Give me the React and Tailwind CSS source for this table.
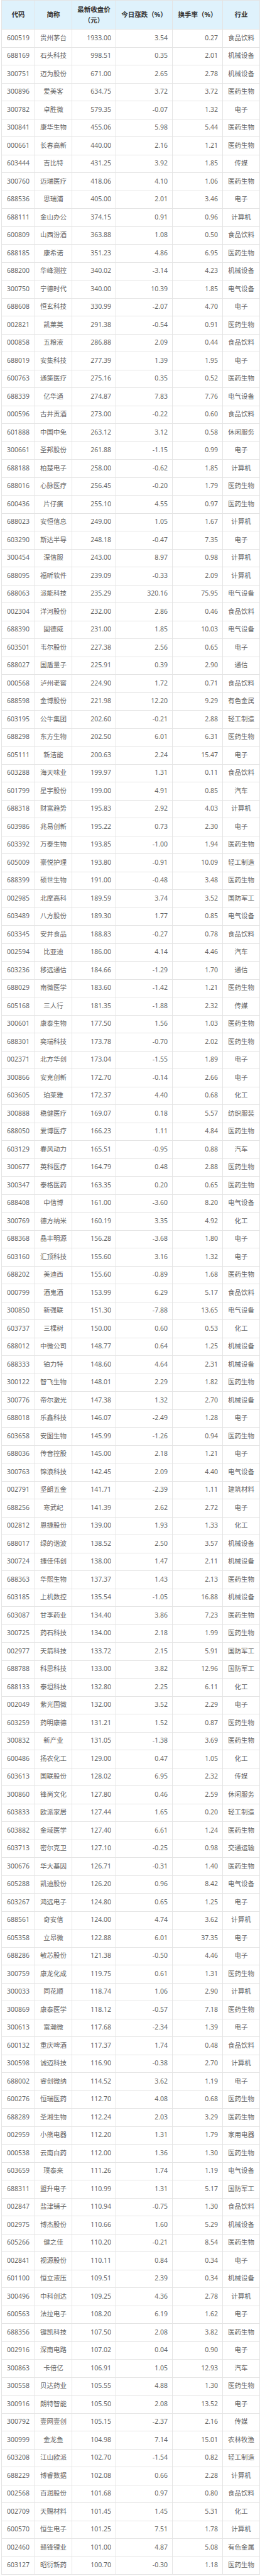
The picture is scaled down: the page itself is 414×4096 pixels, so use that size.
import React from "react";

// code | name | close | change % | turnover % | industry
const raw = `600519 贵州茅台 1933.00 3.54 0.27 食品饮料
688169 石头科技 998.51 0.35 2.01 机械设备
300751 迈为股份 671.00 2.65 2.78 机械设备
300896 爱美客 634.75 3.72 3.72 医药生物
300782 卓胜微 579.35 -0.07 1.32 电子
300841 康华生物 455.06 5.98 5.44 医药生物
000661 长春高新 440.00 2.16 1.21 医药生物
603444 吉比特 431.25 3.92 1.85 传媒
300760 迈瑞医疗 418.06 4.10 1.06 医药生物
688536 思瑞浦 405.00 2.01 3.46 电子
688111 金山办公 374.15 0.91 0.96 计算机
600809 山西汾酒 363.88 1.08 0.50 食品饮料
688185 康希诺 351.23 4.86 6.95 医药生物
688200 华峰测控 340.02 -3.14 4.23 机械设备
300750 宁德时代 340.00 10.39 1.85 电气设备
688608 恒玄科技 330.99 -2.07 4.70 电子
002821 凯莱英 291.38 -0.54 0.91 医药生物
000858 五粮液 286.88 2.09 0.44 食品饮料
688019 安集科技 277.39 1.39 1.95 电子
600763 通策医疗 275.16 0.35 0.52 医药生物
688339 亿华通 274.87 7.83 7.76 电气设备
000596 古井贡酒 273.00 -0.22 0.60 食品饮料
601888 中国中免 263.12 3.12 0.58 休闲服务
300661 圣邦股份 261.88 -1.15 0.99 电子
688188 柏楚电子 258.00 -0.62 1.85 计算机
688016 心脉医疗 256.45 -0.20 1.79 医药生物
600436 片仔癀 255.10 4.55 0.97 医药生物
688023 安恒信息 249.00 1.05 1.67 计算机
603290 斯达半导 248.18 -0.47 7.35 电子
300454 深信服 243.00 8.97 0.98 计算机
688095 福昕软件 239.09 -0.33 2.09 计算机
688063 派能科技 235.29 320.16 75.95 电气设备
002304 洋河股份 232.00 2.86 0.46 食品饮料
688390 固德威 231.00 1.85 10.03 电气设备
603501 韦尔股份 227.38 2.56 0.65 电子
688027 国盾量子 225.91 0.39 2.90 通信
000568 泸州老窖 224.90 1.72 0.71 食品饮料
688598 金博股份 221.98 12.20 9.29 有色金属
603195 公牛集团 202.60 -0.21 2.88 轻工制造
688298 东方生物 202.50 6.01 6.31 医药生物
605111 新洁能 200.63 2.24 15.47 电子
603288 海天味业 199.97 1.31 0.11 食品饮料
601799 星宇股份 199.00 4.91 0.85 汽车
688318 财富趋势 195.83 2.92 4.03 计算机
603986 兆易创新 195.22 0.73 2.30 电子
603392 万泰生物 193.85 -1.00 1.94 医药生物
605009 豪悦护理 193.80 -0.91 10.09 轻工制造
688399 硕世生物 191.00 -0.48 3.48 医药生物
002985 北摩高科 189.59 3.74 3.52 国防军工
603489 八方股份 189.30 1.77 0.85 电气设备
603345 安井食品 188.83 -0.27 0.78 食品饮料
002594 比亚迪 186.00 4.14 4.46 汽车
603236 移远通信 184.66 -1.29 1.70 通信
688029 南微医学 183.60 -1.42 1.21 医药生物
605168 三人行 181.35 -1.88 2.32 传媒
300601 康泰生物 177.50 1.56 1.03 医药生物
688301 奕瑞科技 173.78 -0.70 2.02 医药生物
002371 北方华创 173.04 -1.55 1.89 电子
300866 安克创新 172.70 -0.14 2.66 电子
603605 珀莱雅 172.37 4.40 0.68 化工
300888 稳健医疗 169.07 0.18 5.57 纺织服装
688050 爱博医疗 166.23 1.11 4.84 医药生物
603129 春风动力 165.51 -0.95 0.88 汽车
300677 英科医疗 164.79 0.48 2.88 医药生物
300347 泰格医药 163.35 0.20 0.65 医药生物
688408 中信博 161.00 -3.60 8.20 电气设备
300769 德方纳米 160.19 3.35 4.92 化工
688368 晶丰明源 156.28 -3.68 1.80 电子
603160 汇顶科技 155.60 3.16 1.32 电子
688202 美迪西 155.60 -0.89 1.68 医药生物
000799 酒鬼酒 153.99 6.29 5.17 食品饮料
300850 新强联 151.30 -7.88 13.65 电气设备
603737 三棵树 150.00 0.60 0.53 化工
688012 中微公司 148.77 0.64 1.25 机械设备
688333 铂力特 148.60 4.64 2.31 机械设备
300122 智飞生物 148.01 2.29 1.82 医药生物
300776 帝尔激光 147.38 1.32 2.70 机械设备
688018 乐鑫科技 146.07 -2.49 1.28 电子
603658 安图生物 145.99 -1.26 0.94 医药生物
688036 传音控股 145.00 2.18 1.21 电子
300763 锦浪科技 142.45 2.09 4.40 电气设备
002791 坚朗五金 141.71 -2.39 1.11 建筑材料
688256 寒武纪 141.39 2.62 2.72 电子
002812 恩捷股份 139.00 1.93 1.33 化工
688017 绿的谐波 138.52 2.50 3.57 机械设备
300724 捷佳伟创 138.00 1.47 2.11 机械设备
688363 华熙生物 137.37 1.43 2.13 医药生物
603185 上机数控 135.54 -1.05 16.88 机械设备
603087 甘李药业 134.40 3.86 7.23 医药生物
300725 药石科技 134.00 2.18 1.99 医药生物
002977 天箭科技 133.72 2.15 5.91 国防军工
688788 科思科技 133.00 3.82 12.96 国防军工
688133 泰坦科技 132.80 2.25 6.11 化工
002049 紫光国微 132.00 3.52 2.29 电子
603259 药明康德 131.21 1.52 0.87 医药生物
300832 新产业 131.05 -1.38 3.69 医药生物
600486 扬农化工 129.00 0.47 1.05 化工
603613 国联股份 128.02 6.95 2.32 传媒
300860 锋尚文化 127.80 0.46 2.59 休闲服务
603833 欧派家居 127.44 1.65 0.20 轻工制造
603882 金域医学 127.40 6.61 1.24 医药生物
603713 密尔克卫 127.10 -0.25 0.98 交通运输
300676 华大基因 126.71 -0.31 1.40 医药生物
605288 凯迪股份 126.20 0.96 8.42 电气设备
603267 鸿远电子 124.80 0.65 1.25 电子
688561 奇安信 124.00 4.74 3.62 计算机
605358 立昂微 122.88 6.01 37.35 电子
688286 敏芯股份 121.38 -0.50 4.46 电子
300759 康龙化成 119.75 0.61 1.31 医药生物
300033 同花顺 118.74 1.06 2.90 计算机
300869 康泰医学 118.12 -0.57 7.18 医药生物
300613 富瀚微 117.68 -2.34 1.39 电子
600132 重庆啤酒 117.37 1.74 0.48 食品饮料
300598 诚迈科技 116.90 -0.38 2.70 计算机
688002 睿创微纳 114.52 3.62 1.19 电子
600276 恒瑞医药 112.70 4.08 0.68 医药生物
688289 圣湘生物 112.24 2.03 3.29 医药生物
002959 小熊电器 112.20 1.31 1.79 家用电器
000538 云南白药 112.00 1.36 1.30 医药生物
603659 璞泰来 111.26 1.74 1.19 电气设备
688311 盟升电子 110.99 1.31 5.17 国防军工
002847 盐津铺子 110.94 -0.75 1.30 食品饮料
002975 博杰股份 110.66 1.60 5.29 机械设备
605266 健之佳 110.20 -0.21 8.54 医药生物
002841 视源股份 110.11 0.84 0.34 电子
601100 恒立液压 109.51 2.39 0.34 机械设备
300496 中科创达 109.25 4.36 2.78 计算机
600563 法拉电子 108.20 6.19 1.62 电子
688356 键凯科技 107.50 2.08 3.82 医药生物
002916 深南电路 107.02 0.04 0.90 电子
300863 卡倍亿 106.91 1.05 12.93 汽车
300558 贝达药业 105.55 4.88 1.30 医药生物
300916 朗特智能 105.50 2.08 13.52 电子
300792 壹网壹创 105.15 -2.37 2.16 传媒
300999 金龙鱼 104.98 7.14 15.01 农林牧渔
603208 江山欧派 102.70 -1.54 0.82 轻工制造
688229 博睿数据 102.08 0.66 2.28 计算机
002568 百润股份 101.68 0.97 0.80 食品饮料
002709 天赐材料 101.45 1.45 5.31 化工
600570 恒生电子 101.25 7.51 1.78 计算机
002460 赣锋锂业 101.00 4.87 5.08 有色金属
603127 昭衍新药 100.70 -0.30 1.18 医药生物`;

const rows = raw.split("\n").map((line) => line.trim().split(" "));

const App = () => {
  return (
    <div
      className="w-[414px] bg-white pl-[2px] pr-[1px]"
      style={{ fontFamily: '"Noto Sans", "Noto Sans CJK SC", sans-serif' }}
    >
      <table className="w-[411px] table-fixed border-collapse text-[10.5px] text-[#666]">
        <colgroup>
          <col className="w-[53px]" />
          <col className="w-[59px]" />
          <col className="w-[70px]" />
          <col className="w-[90px]" />
          <col className="w-[80px]" />
          <col className="w-[59px]" />
        </colgroup>
        <thead>
          <tr className="h-[46px] bg-[#dff2fc] font-bold text-[#333] leading-[17px]">
            <th className="border border-[#e4e4e4] text-center font-bold">代码</th>
            <th className="border border-[#e4e4e4] text-center font-bold">简称</th>
            <th className="border border-[#e4e4e4] text-center font-bold">
              最新收盘价
              <br />
              （元）
            </th>
            <th className="border border-[#e4e4e4] text-center font-bold">今日涨跌（%）</th>
            <th className="border border-[#e4e4e4] text-center font-bold">换手率（%）</th>
            <th className="border border-[#e4e4e4] text-center font-bold">行业</th>
          </tr>
        </thead>
        <tbody>
          {rows.map((r) => (
            <tr key={r[0]} className="h-[28.5px]">
              <td className="border border-[#e4e4e4] text-center">{r[0]}</td>
              <td className="border border-[#e4e4e4] text-center">{r[1]}</td>
              <td className="border border-[#e4e4e4] pr-[7px] text-right">{r[2]}</td>
              <td className="border border-[#e4e4e4] pr-[7px] text-right">{r[3]}</td>
              <td className="border border-[#e4e4e4] pr-[7px] text-right">{r[4]}</td>
              <td className="border border-[#e4e4e4] text-center">{r[5]}</td>
            </tr>
          ))}
        </tbody>
      </table>
    </div>
  );
};

export default App;
